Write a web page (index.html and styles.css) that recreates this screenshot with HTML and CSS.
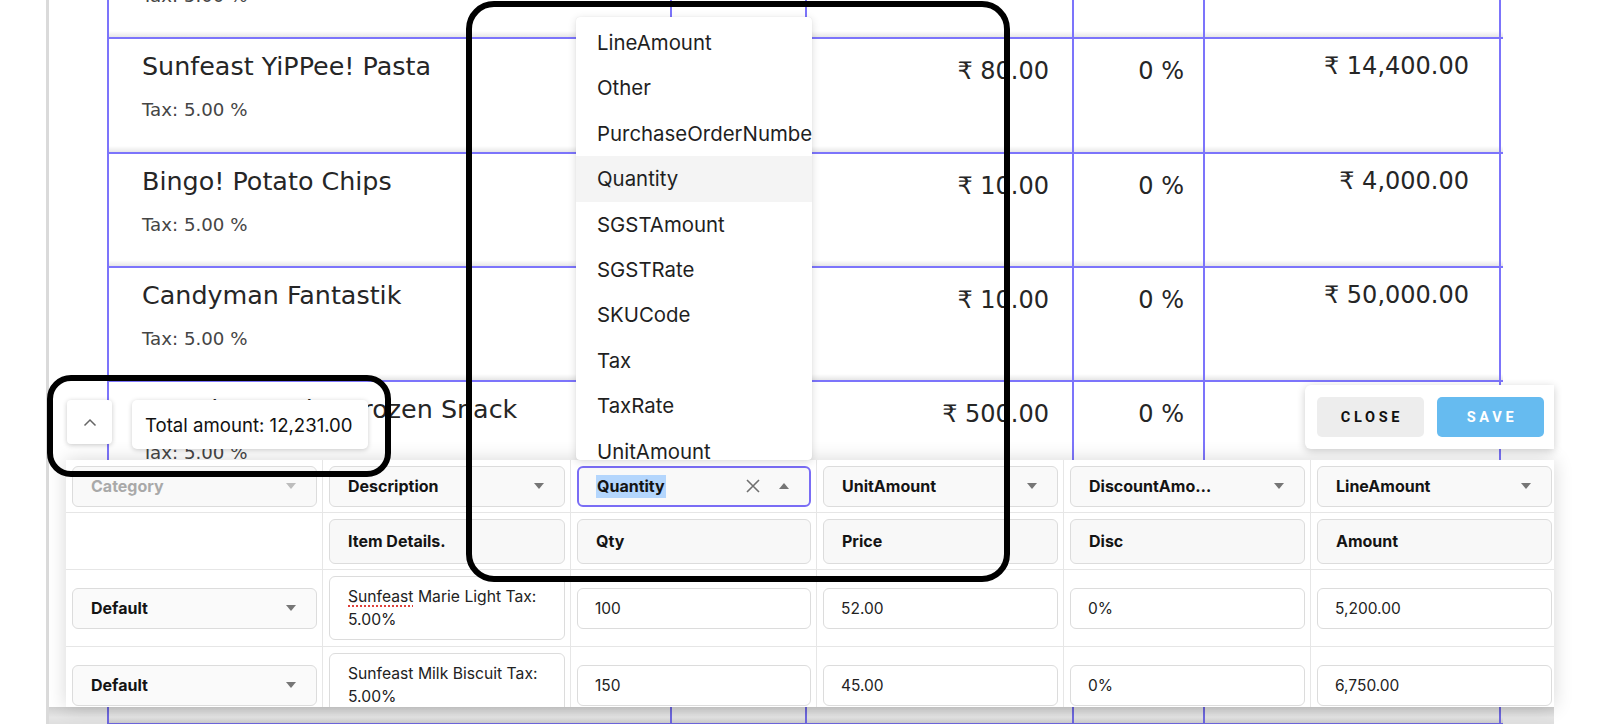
FILE: index.html
```html
<!DOCTYPE html>
<html lang="en">
<head>
<meta charset="utf-8">
<title>Line items mapping</title>
<link rel="stylesheet" href="styles.css">
</head>
<body>
<div class="app">
  <div class="gutter"></div>
  <div class="main">
    <div class="items">
      <div class="trow">
        <div class="cell desc"><div class="name">Sunfeast Bounce Cream</div><div class="tax">Tax: 5.00 %</div></div>
        <div class="cell qty">120</div>
        <div class="cell price">₹ 20.00</div>
        <div class="cell disc">0 %</div>
        <div class="cell amt">₹ 2,400.00</div>
      </div>
      <div class="trow">
        <div class="cell desc"><div class="name">Sunfeast YiPPee! Pasta</div><div class="tax">Tax: 5.00 %</div></div>
        <div class="cell qty">180</div>
        <div class="cell price">₹ 80.00</div>
        <div class="cell disc">0 %</div>
        <div class="cell amt">₹ 14,400.00</div>
      </div>
      <div class="trow">
        <div class="cell desc"><div class="name">Bingo! Potato Chips</div><div class="tax">Tax: 5.00 %</div></div>
        <div class="cell qty">400</div>
        <div class="cell price">₹ 10.00</div>
        <div class="cell disc">0 %</div>
        <div class="cell amt">₹ 4,000.00</div>
      </div>
      <div class="trow">
        <div class="cell desc"><div class="name">Candyman Fantastik</div><div class="tax">Tax: 5.00 %</div></div>
        <div class="cell qty">5000</div>
        <div class="cell price">₹ 10.00</div>
        <div class="cell disc">0 %</div>
        <div class="cell amt">₹ 50,000.00</div>
      </div>
      <div class="trow">
        <div class="cell desc"><div class="name">McCain Veggies Frozen Snack</div><div class="tax">Tax: 5.00 %</div></div>
        <div class="cell qty">10</div>
        <div class="cell price">₹ 500.00</div>
        <div class="cell disc">0 %</div>
        <div class="cell amt">₹ 5,000.00</div>
      </div>
      <div class="trow">
        <div class="cell desc"><div class="name">Sunfeast Marie Light</div><div class="tax">Tax: 5.00 %</div></div>
        <div class="cell qty">100</div>
        <div class="cell price">₹ 52.00</div>
        <div class="cell disc">0 %</div>
        <div class="cell amt">₹ 5,200.00</div>
      </div>
      <div class="trow">
        <div class="cell desc"><div class="name">Sunfeast Milk Biscuit</div><div class="tax">Tax: 5.00 %</div></div>
        <div class="cell qty">150</div>
        <div class="cell price">₹ 45.00</div>
        <div class="cell disc">0 %</div>
        <div class="cell amt">₹ 6,750.00</div>
      </div>
    </div>
  </div>
</div>

<div class="menu">
  <div class="menu-item">LineAmount</div>
  <div class="menu-item">Other</div>
  <div class="menu-item">PurchaseOrderNumber</div>
  <div class="menu-item active">Quantity</div>
  <div class="menu-item">SGSTAmount</div>
  <div class="menu-item">SGSTRate</div>
  <div class="menu-item">SKUCode</div>
  <div class="menu-item">Tax</div>
  <div class="menu-item">TaxRate</div>
  <div class="menu-item">UnitAmount</div>
</div>

<div class="collapse">
  <svg width="14" height="9" viewBox="0 0 14 9"><path d="M1.5 7.5 L7 2 L12.5 7.5" fill="none" stroke="#666" stroke-width="1.5"/></svg>
</div>
<div class="total">Total amount: 12,231.00</div>

<div class="actions">
  <div class="btn btn-close">CLOSE</div>
  <div class="btn btn-save">SAVE</div>
</div>

<div class="panel">
  <div class="pgrid">
    <div class="pc"><div class="sel disabled"><span class="label">Category</span><span class="caret"></span></div></div>
    <div class="pc"><div class="sel"><span class="label">Description</span><span class="caret"></span></div></div>
    <div class="pc"><div class="sel focus"><span class="label"><span class="hl">Quantity</span></span>
      <svg class="clear" width="16" height="16" viewBox="0 0 16 16"><path d="M2 2 L14 14 M14 2 L2 14" stroke="#707070" stroke-width="1.6" fill="none"/></svg>
      <span class="caret up"></span></div></div>
    <div class="pc"><div class="sel"><span class="label">UnitAmount</span><span class="caret"></span></div></div>
    <div class="pc"><div class="sel"><span class="label short">DiscountAmount</span><span class="caret"></span></div></div>
    <div class="pc"><div class="sel"><span class="label">LineAmount</span><span class="caret"></span></div></div>

    <div class="pc"></div>
    <div class="pc"><div class="hdr">Item Details.</div></div>
    <div class="pc"><div class="hdr">Qty</div></div>
    <div class="pc"><div class="hdr">Price</div></div>
    <div class="pc"><div class="hdr">Disc</div></div>
    <div class="pc"><div class="hdr">Amount</div></div>

    <div class="pc"><div class="sel plain"><span class="label">Default</span><span class="caret"></span></div></div>
    <div class="pc"><div class="ta"><span class="spell">Sunfeast</span> Marie Light Tax: 5.00%</div></div>
    <div class="pc"><div class="inp">100</div></div>
    <div class="pc"><div class="inp">52.00</div></div>
    <div class="pc"><div class="inp">0%</div></div>
    <div class="pc"><div class="inp">5,200.00</div></div>

    <div class="pc"><div class="sel plain"><span class="label">Default</span><span class="caret"></span></div></div>
    <div class="pc"><div class="ta">Sunfeast Milk Biscuit Tax: 5.00%</div></div>
    <div class="pc"><div class="inp">150</div></div>
    <div class="pc"><div class="inp">45.00</div></div>
    <div class="pc"><div class="inp">0%</div></div>
    <div class="pc"><div class="inp">6,750.00</div></div>
  </div>
</div>

<div class="shade"></div>

<div class="anno anno-big"></div>
<div class="anno anno-small"></div>
</body>
</html>
```

FILE: styles.css
```css
html, body {
  margin: 0;
  padding: 0;
}
body {
  width: 1600px;
  height: 724px;
  overflow: hidden;
  position: relative;
  background: #fff;
  font-family: Inter, "Noto Sans", sans-serif;
  color: #1a1a1a;
}

/* background page with items table */
.app {
  display: flex;
  height: 724px;
}
.gutter {
  width: 46px;
  flex: none;
}
.main {
  flex: 1;
  border-left: 3px solid #dadada;
  overflow: hidden;
}
.items {
  margin: -75px 0 0 58px;
  width: 1394px;
  border-left: 2px solid #7c74fb;
}
.trow {
  display: grid;
  grid-template-columns: 563px 135px 267px 131px 296px;
  height: 114.25px;
  box-sizing: border-box;
  border-bottom: 2px solid #7c74fb;
  background: linear-gradient(to top, #e6e6e6 0, #f3f3f3 3px, #ffffff 6px);
  font-family: "DejaVu Sans", "Noto Sans", sans-serif;
  color: #262626;
}
.cell {
  border-right: 2px solid #7c74fb;
  box-sizing: border-box;
}
.desc {
  padding: 12px 0 0 33px;
}
.name {
  font-size: 25.4px;
  line-height: 30px;
  white-space: nowrap;
}
.tax {
  margin-top: 18px;
  font-size: 18.2px;
  line-height: 22px;
  color: #454545;
}
.qty {
  text-align: right;
  padding: 17px 20px 0 0;
  font-size: 24px;
  line-height: 30px;
}
.price, .disc, .amt {
  text-align: right;
  font-size: 24px;
  line-height: 30px;
  white-space: nowrap;
}
.price {
  padding: 17px 23px 0 0;
}
.disc {
  padding: 17px 19px 0 0;
}
.amt {
  padding: 12px 30px 0 0;
}

/* dropdown menu */
.menu {
  position: absolute;
  left: 576px;
  top: 17px;
  width: 236px;
  height: 443px;
  box-sizing: border-box;
  padding-top: 3px;
  background: #fff;
  border-radius: 4px;
  box-shadow: 0 2px 8px rgba(0, 0, 0, 0.14), 0 0 1px rgba(0, 0, 0, 0.12);
  overflow: hidden;
  z-index: 5;
}
.menu-item {
  height: 45.4px;
  line-height: 45.4px;
  padding-left: 21px;
  font-size: 20.4px;
  color: #1f1f1f;
  white-space: nowrap;
}
.menu-item.active {
  background: #f4f4f4;
}

/* floating controls */
.collapse {
  position: absolute;
  left: 67px;
  top: 400px;
  width: 45px;
  height: 44px;
  background: #fff;
  border-radius: 4px;
  box-shadow: 0 1px 5px rgba(0, 0, 0, 0.22);
  display: flex;
  align-items: center;
  justify-content: center;
  z-index: 6;
}
.total {
  position: absolute;
  left: 132px;
  top: 400px;
  width: 236px;
  height: 49px;
  box-sizing: border-box;
  padding-left: 13px;
  background: #fff;
  border-radius: 5px;
  box-shadow: 0 1px 5px rgba(0, 0, 0, 0.2);
  display: flex;
  align-items: center;
  font-size: 18.6px;
  color: #111;
  white-space: nowrap;
  z-index: 6;
}
.actions {
  position: absolute;
  left: 1305px;
  top: 385px;
  width: 249px;
  height: 64px;
  box-sizing: border-box;
  padding: 12px 0 0 12px;
  display: flex;
  gap: 13px;
  background: #fff;
  border-radius: 6px 0 0 6px;
  box-shadow: 0 2px 8px rgba(0, 0, 0, 0.2);
  z-index: 4;
}
.btn {
  width: 107px;
  height: 40px;
  border-radius: 5px;
  display: flex;
  align-items: center;
  justify-content: center;
  font-family: Roboto, "Liberation Sans", sans-serif;
  font-weight: 700;
  font-size: 14.5px;
  letter-spacing: 3.7px;
  padding-left: 3px;
  box-sizing: border-box;
}
.btn-close {
  background: #ededed;
  color: #111;
}
.btn-save {
  background: #66bbf0;
  color: #fff;
}

/* mapping panel */
.panel {
  position: absolute;
  left: 66px;
  top: 460px;
  width: 1488px;
  height: 247px;
  background: #fff;
  overflow: hidden;
  box-shadow: 0 0 18px rgba(0, 0, 0, 0.16);
  z-index: 3;
}
.pgrid {
  display: grid;
  grid-template-columns: 257px 248px 246px 247px 247px 247px;
  grid-template-rows: 53px 57px 77px 77px;
  width: 1492px;
}
.pc {
  box-sizing: border-box;
  border-right: 1px solid #e6e6e6;
  border-bottom: 1px solid #e6e6e6;
  padding: 0 5px 0 6px;
  display: flex;
  align-items: center;
  min-width: 0;
}
.sel {
  width: 100%;
  height: 41px;
  box-sizing: border-box;
  border: 1px solid #dcdcdc;
  border-radius: 6px;
  background: #f9f9f9;
  display: flex;
  align-items: center;
  padding: 0 20px 0 18px;
  font-size: 16px;
  font-weight: 700;
  color: #141414;
  min-width: 0;
}
.sel .label {
  flex: 1;
  min-width: 0;
  overflow: hidden;
  text-overflow: ellipsis;
  white-space: nowrap;
}
.sel .label.short {
  flex: 0 1 auto;
  max-width: 125px;
  margin-right: auto;
}
.sel.disabled {
  color: #a9a9a9;
}
.sel.disabled .caret {
  border-top-color: #bdbdbd;
}
.sel.plain {
  background: #fafafa;
}
.sel.focus {
  border: 2px solid #7a6df5;
  padding: 0 20px 0 17px;
}
.hl {
  background: #b4d6fd;
  padding: 0 1px;
  line-height: 23px;
  display: inline-block;
}
.clear {
  flex: none;
  margin-right: 18px;
}
.caret {
  flex: none;
  width: 0;
  height: 0;
  border-left: 5.5px solid transparent;
  border-right: 5.5px solid transparent;
  border-top: 6px solid #767676;
}
.caret.up {
  border-top: 0;
  border-bottom: 6px solid #767676;
}
.hdr {
  width: 100%;
  height: 45px;
  box-sizing: border-box;
  border: 1px solid #dcdcdc;
  border-radius: 6px;
  background: #f8f8f8;
  display: flex;
  align-items: center;
  padding-left: 18px;
  font-size: 16px;
  font-weight: 700;
  color: #141414;
}
.inp {
  width: 100%;
  height: 41px;
  box-sizing: border-box;
  border: 1px solid #dcdcdc;
  border-radius: 6px;
  background: #fff;
  display: flex;
  align-items: center;
  padding-left: 17px;
  font-size: 15.5px;
  color: #222;
}
.ta {
  width: 100%;
  height: 64px;
  box-sizing: border-box;
  border: 1px solid #dcdcdc;
  border-radius: 6px;
  background: #fff;
  padding: 8px 10px 0 18px;
  font-size: 15.7px;
  line-height: 23px;
  color: #222;
  overflow: hidden;
}
.spell {
  text-decoration: underline dotted #e0413a;
  text-decoration-thickness: 1.5px;
  text-underline-offset: 3px;
}

/* shadow strip under panel */
.shade {
  position: absolute;
  left: 49px;
  top: 707px;
  width: 1505px;
  height: 17px;
  background: linear-gradient(rgba(0, 0, 0, 0.19), rgba(0, 0, 0, 0.1) 60%, rgba(0, 0, 0, 0.13));
  z-index: 2;
}

/* annotation outlines */
.anno {
  position: absolute;
  box-sizing: border-box;
  border: 6px solid #000;
  z-index: 10;
  pointer-events: none;
}
.anno-big {
  left: 466px;
  top: 1px;
  width: 544px;
  height: 581px;
  border-radius: 28px;
}
.anno-small {
  left: 47px;
  top: 375px;
  width: 344px;
  height: 102px;
  border-radius: 24px;
}
```
